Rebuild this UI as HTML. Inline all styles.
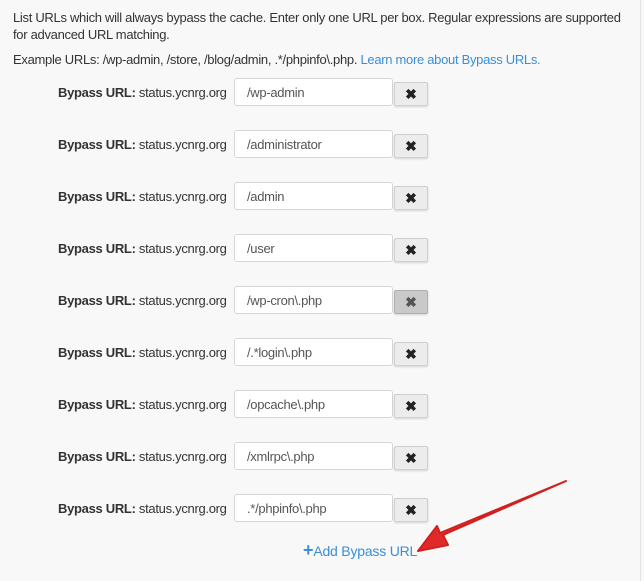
<!DOCTYPE html>
<html><head><style>
body{margin:0;width:644px;height:581px;background:#f8f8f8;font-family:"Liberation Sans",sans-serif;font-size:13px;letter-spacing:-0.3px;color:#333;position:relative;overflow:hidden}
.p{position:absolute;left:13px;line-height:17px;white-space:nowrap}
.row{position:absolute;left:0;width:644px;height:30px}
.lab{position:absolute;left:58px;top:7px;white-space:nowrap}
.lab b{font-weight:bold}
.in{position:absolute;left:234px;top:0;width:145px;height:26px;border:1px solid #d6d6d6;border-radius:3px;background:#fff;padding-left:12px;line-height:27px;color:#555;box-sizing:content-box}
.bt{position:absolute;left:394px;top:4px;width:32px;height:22px;border:1px solid #d0d0d0;border-radius:2px;background:#ececec;box-shadow:0 1px 2px rgba(0,0,0,.15);text-align:center;line-height:22px;font-weight:bold;font-size:14px;color:#222;letter-spacing:0}
a{color:#3a8fd6;text-decoration:none}
</style></head><body>
<div class="p" style="top:9px">List URLs which will always bypass the cache. Enter only one URL per box. Regular expressions are supported<br>for advanced URL matching.</div>
<div class="p" style="top:51px">Example URLs: /wp-admin, /store, /blog/admin, .*/phpinfo\.php. <a>Learn more about Bypass URLs.</a></div>

<div class="row" style="top:78px"><div class="lab"><b>Bypass URL:</b> status.ycnrg.org</div><div class="in">/wp-admin</div><div class="bt">✖</div></div>
<div class="row" style="top:130px"><div class="lab"><b>Bypass URL:</b> status.ycnrg.org</div><div class="in">/administrator</div><div class="bt">✖</div></div>
<div class="row" style="top:182px"><div class="lab"><b>Bypass URL:</b> status.ycnrg.org</div><div class="in">/admin</div><div class="bt">✖</div></div>
<div class="row" style="top:234px"><div class="lab"><b>Bypass URL:</b> status.ycnrg.org</div><div class="in">/user</div><div class="bt">✖</div></div>
<div class="row" style="top:286px"><div class="lab"><b>Bypass URL:</b> status.ycnrg.org</div><div class="in">/wp-cron\.php</div><div class="bt" style="background:#c9c9c9;border-color:#b0b0b0;color:#555">✖</div></div>
<div class="row" style="top:338px"><div class="lab"><b>Bypass URL:</b> status.ycnrg.org</div><div class="in">/.*login\.php</div><div class="bt">✖</div></div>
<div class="row" style="top:390px"><div class="lab"><b>Bypass URL:</b> status.ycnrg.org</div><div class="in">/opcache\.php</div><div class="bt">✖</div></div>
<div class="row" style="top:442px"><div class="lab"><b>Bypass URL:</b> status.ycnrg.org</div><div class="in">/xmlrpc\.php</div><div class="bt">✖</div></div>
<div class="row" style="top:494px"><div class="lab"><b>Bypass URL:</b> status.ycnrg.org</div><div class="in">.*/phpinfo\.php</div><div class="bt">✖</div></div>

<div style="position:absolute;left:303px;top:543px;font-size:14px;letter-spacing:-0.2px"><a><b style="font-size:18px;line-height:14px">+</b>Add Bypass URL</a></div>

<svg style="position:absolute;left:0;top:0" width="644" height="581">
<path d="M566 481 L443 535 L448 545 L418 551 L437 526 L440 533 Z" fill="#e02a2a" stroke="#d02020" stroke-width="2" stroke-linejoin="round"/>
</svg>
<div style="position:absolute;right:3px;top:0;width:1px;height:581px;background:#e4e4e4"></div>
</body></html>
